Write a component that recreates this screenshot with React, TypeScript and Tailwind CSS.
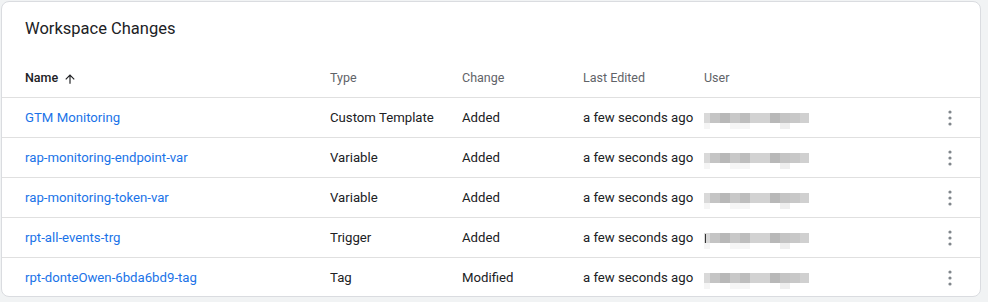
import React from "react";

type Row = {
  name: string;
  type: string;
  change: string;
  edited: string;
  cursor?: boolean;
};

const rows: Row[] = [
  { name: "GTM Monitoring", type: "Custom Template", change: "Added", edited: "a few seconds ago" },
  { name: "rap-monitoring-endpoint-var", type: "Variable", change: "Added", edited: "a few seconds ago" },
  { name: "rap-monitoring-token-var", type: "Variable", change: "Added", edited: "a few seconds ago" },
  { name: "rpt-all-events-trg", type: "Trigger", change: "Added", edited: "a few seconds ago", cursor: true },
  { name: "rpt-donteOwen-6bda6bd9-tag", type: "Tag", change: "Modified", edited: "a few seconds ago" },
];

// blurred user email, drawn as mosaic blocks
const topBlocks = ["#d9d9d9", "#c4c4c4", "#b8b8b8", "#c8c8c8", "#bdbdbd", "#d2d2d2", "#d2d2d2", "#b8b8b8", "#c4c4c4", "#c8c8c8", "#d0d0d0"];
const bottomBlocks = ["#f5f5f5", "#ffffff", "#ffffff", "#f6f6f6", "#f6f6f6", "#ffffff", "#ffffff", "#ffffff", "#efefef", "#ffffff", "#ffffff"];
const widths = ["w-[6px]", "w-[10px]", "w-[10px]", "w-[10px]", "w-[10px]", "w-[10px]", "w-[10px]", "w-[10px]", "w-[10px]", "w-[10px]", "w-[9px]"];

const BlurredUser: React.FC = () => (
  <div className="flex flex-col">
    <div className="flex h-[10px]">
      {topBlocks.map((c, i) => (
        <div key={i} className={`${widths[i]} h-full`} style={{ backgroundColor: c }} />
      ))}
    </div>
    <div className="flex h-[6px]">
      {bottomBlocks.map((c, i) => (
        <div key={i} className={`${widths[i]} h-full`} style={{ backgroundColor: c }} />
      ))}
    </div>
  </div>
);

const Kebab: React.FC = () => (
  <svg width="4" height="16" viewBox="0 0 4 16" fill="#80868b">
    <circle cx="2" cy="2" r="1.6" />
    <circle cx="2" cy="8" r="1.6" />
    <circle cx="2" cy="14" r="1.6" />
  </svg>
);

export default function App() {
  return (
    <div className="w-[988px] h-[302px] bg-[#f1f3f4] pt-[1px] pl-[1px]" style={{ fontFamily: "Roboto, 'Liberation Sans', sans-serif" }}>
      <div className="w-[980px] h-[296px] bg-white border border-[#dadce0] rounded-[8px] overflow-hidden">
        <div className="h-[56px] pl-[23px] pt-[15px] text-[16.5px] text-[#202124]">Workspace Changes</div>

        <div className="h-[40px] flex items-center pt-[2px] border-b border-[#e0e0e0] text-[12.5px] text-[#5f6368]">
          <div className="w-[328px] pl-[23px] flex items-center gap-[5px] font-medium text-[#202124]">
            Name
            <svg width="14" height="14" viewBox="0 0 24 24" fill="#202124">
              <path d="M4 12l1.41 1.41L11 7.83V20h2V7.83l5.58 5.59L20 12l-8-8-8 8z" />
            </svg>
          </div>
          <div className="w-[132px]">Type</div>
          <div className="w-[121px]">Change</div>
          <div className="w-[121px]">Last Edited</div>
          <div>User</div>
        </div>

        {rows.map((r, i) => (
          <div
            key={i}
            className={`h-[40px] flex items-center text-[13.2px] text-[#202124] ${i < rows.length - 1 ? "border-b border-[#e0e0e0]" : ""}`}
          >
            <div className="w-[328px] pl-[23px] text-[#1a73e8]">{r.name}</div>
            <div className="w-[132px]">{r.type}</div>
            <div className="w-[121px]">{r.change}</div>
            <div className="w-[121px]">{r.edited}</div>
            <div className="flex-1 flex items-center relative pt-[6px]">
              {r.cursor && <div className="absolute left-[1px] top-[7px] w-[1px] h-[9px] bg-[#333]" />}
              <BlurredUser />
            </div>
            <div className="w-[40px] flex justify-center mr-[10px]">
              <Kebab />
            </div>
          </div>
        ))}
      </div>
    </div>
  );
}
